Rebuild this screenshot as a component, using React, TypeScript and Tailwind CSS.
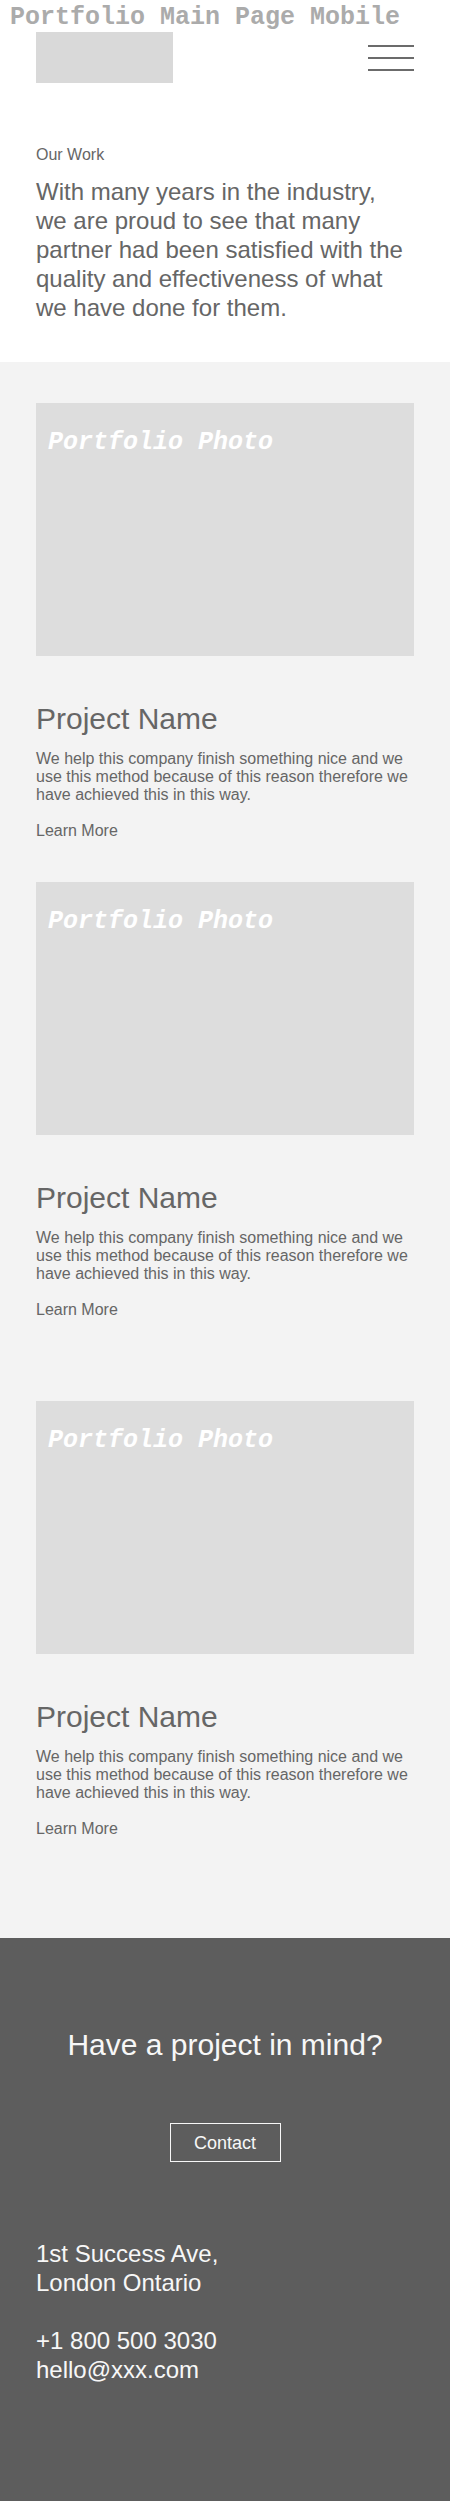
import React from 'react';

type ProjectProps = {
  gapAfter: string;
};

function ProjectCard({ gapAfter }: ProjectProps) {
  return (
    <div className={gapAfter}>
      <div className="h-[253px] w-full bg-[#dddddd] pt-[27px] pl-[12px]">
        <p className="font-['Liberation_Mono',monospace] text-[25px] leading-[25px] font-bold italic text-white">
          Portfolio Photo
        </p>
      </div>
      <h2 className="mt-[46px] text-[30px] leading-[34px] text-[#666666]">Project Name</h2>
      <p className="mt-[14px] text-[16px] leading-[18px] text-[#666666]">
        We help this company finish something nice and we use this method because of this reason therefore we
        have achieved this in this way.
      </p>
      <a className="mt-[17px] block text-[16px] leading-[20px] text-[#666666]" href="#">
        Learn More
      </a>
    </div>
  );
}

export default function App() {
  return (
    <div className="w-[450px] font-['Liberation_Sans',Arial,sans-serif]">
      {/* header */}
      <div className="bg-white">
        <p className="pt-[5px] pl-[10px] font-['Liberation_Mono',monospace] text-[25px] leading-[25px] font-bold text-[#ababab]">
          Portfolio Main Page Mobile
        </p>
        <div className="mt-[2px] flex items-center justify-between px-[36px]">
          <div className="h-[51px] w-[137px] bg-[#d9d9d9]" />
          <button className="flex w-[46px] flex-col gap-[10px]">
            <span className="block h-[2px] w-full bg-[#6b6b6b]" />
            <span className="block h-[2px] w-full bg-[#6b6b6b]" />
            <span className="block h-[2px] w-full bg-[#6b6b6b]" />
          </button>
        </div>

        <div className="px-[36px] pt-[62px] pb-[40px]">
          <p className="text-[16px] leading-[20px] text-[#666666]">Our Work</p>
          <p className="mt-[12px] max-w-[372px] text-[24px] leading-[29px] text-[#666666]">
            With many years in the industry, we are proud to see that many partner had been satisfied with the
            quality and effectiveness of what we have done for them.
          </p>
        </div>
      </div>

      {/* projects */}
      <div className="bg-[#f3f3f3] px-[36px] pt-[41px] pb-[99px]">
        <ProjectCard gapAfter="mb-[41px]" />
        <ProjectCard gapAfter="mb-[81px]" />
        <ProjectCard gapAfter="" />
      </div>

      {/* footer */}
      <div className="bg-[#5d5d5d] pt-[90px] pb-[117px] text-[#f7f7f7]">
        <h3 className="text-center text-[30px] leading-[34px]">Have a project in mind?</h3>
        <div className="mt-[61px] flex justify-center">
          <button className="h-[39px] w-[111px] border border-[#f7f7f7] text-[18px] leading-[20px]">Contact</button>
        </div>
        <div className="mt-[77px] px-[36px] text-[24px] leading-[29px]">
          <p>1st Success Ave,</p>
          <p>London Ontario</p>
          <p className="mt-[29px]">+1 800 500 3030</p>
          <p>hello@xxx.com</p>
        </div>
      </div>
    </div>
  );
}
